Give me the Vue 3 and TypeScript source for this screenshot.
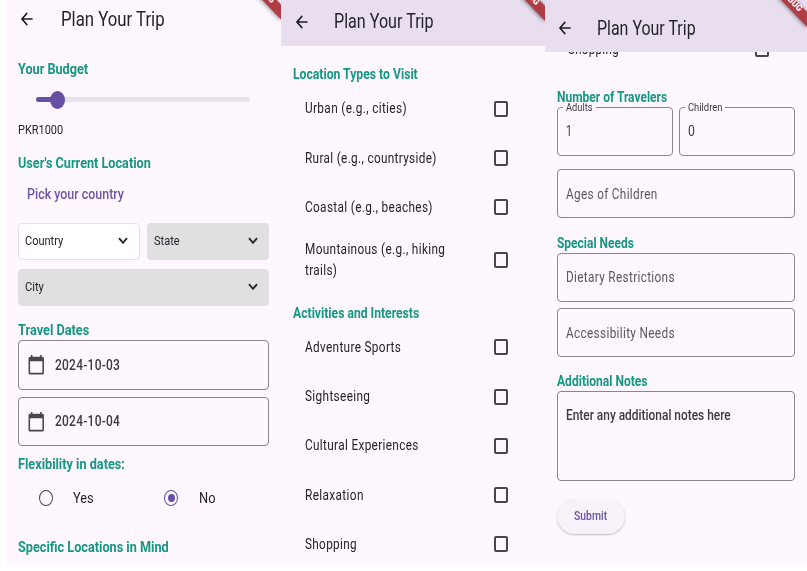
<script setup lang="ts">
import { ref } from 'vue'
import type { Directive } from 'vue'

// Condenses a label horizontally so that it spans the given number of pixels.
const vFit: Directive<HTMLElement, number> = {
  mounted(el, binding) {
    el.style.transform = `scaleX(${binding.value / el.offsetWidth})`
  },
}

interface Choice {
  lines: { text: string; width: number }[]
}

const locationTypes: Choice[] = [
  { lines: [{ text: 'Urban (e.g., cities)', width: 101.5 }] },
  { lines: [{ text: 'Rural (e.g., countryside)', width: 132 }] },
  { lines: [{ text: 'Coastal (e.g., beaches)', width: 127.5 }] },
  { lines: [{ text: 'Mountainous (e.g., hiking', width: 140 }, { text: 'trails)', width: 32 }] },
]

const activities: Choice[] = [
  { lines: [{ text: 'Adventure Sports', width: 96 }] },
  { lines: [{ text: 'Sightseeing', width: 65 }] },
  { lines: [{ text: 'Cultural Experiences', width: 113.7 }] },
  { lines: [{ text: 'Relaxation', width: 58.5 }] },
  { lines: [{ text: 'Shopping', width: 52 }] },
]

const dates = ['2024-10-03', '2024-10-04']
const flexible = ref('No')
const flexOptions = [
  { label: 'Yes', width: 21 },
  { label: 'No', width: 16.5 },
]
</script>

<template>
  <main class="board">
    <section class="screen first">
      <header class="bar">
        <svg class="back" viewBox="0 0 24 24" preserveAspectRatio="none"><path d="M20 11H7.83l5.59-5.59L12 4l-8 8 8 8 1.41-1.41L7.83 13H20v-2z" /></svg>
        <h1 v-fit="104">Plan Your Trip</h1>
      </header>
      <div class="body">
        <h2 v-fit="70.5">Your Budget</h2>
        <div class="slider"><div class="filled"></div><div class="thumb"></div></div>
        <div class="amount"><span v-fit="45.5">PKR1000</span></div>
        <h2 v-fit="133">User's Current Location</h2>
        <div class="pick"><span v-fit="97">Pick your country</span></div>
        <div class="selects">
          <div class="select open"><span v-fit="38.5">Country</span><svg class="chev" viewBox="0 0 10 8" preserveAspectRatio="none"><path d="M1 1.2 5 5.8 9 1.2" /></svg></div>
          <div class="select"><span v-fit="26">State</span><svg class="chev" viewBox="0 0 10 8" preserveAspectRatio="none"><path d="M1 1.2 5 5.8 9 1.2" /></svg></div>
          <div class="select wide"><span v-fit="19">City</span><svg class="chev" viewBox="0 0 10 8" preserveAspectRatio="none"><path d="M1 1.2 5 5.8 9 1.2" /></svg></div>
        </div>
        <h2 v-fit="71">Travel Dates</h2>
        <div class="dates">
          <div v-for="d in dates" :key="d" class="field">
            <svg class="cal" viewBox="0 0 24 24" preserveAspectRatio="none"><path d="M20 3h-1V1h-2v2H7V1H5v2H4c-1.1 0-2 .9-2 2v16c0 1.1.9 2 2 2h16c1.1 0 2-.9 2-2V5c0-1.1-.9-2-2-2zm0 18H4V8h16v13z" /></svg>
            <span v-fit="65">{{ d }}</span>
          </div>
        </div>
        <h2 v-fit="107">Flexibility in dates:</h2>
        <div class="radios">
          <label v-for="o in flexOptions" :key="o.label" @click="flexible = o.label">
            <i class="radio" :class="{ on: flexible === o.label }"></i>
            <span v-fit="o.width">{{ o.label }}</span>
          </label>
        </div>
        <h2 v-fit="150.5">Specific Locations in Mind</h2>
      </div>
      <svg class="ribbon" viewBox="0 0 40 40"><g transform="translate(0 -7.5)"><path d="M-6 -21 40 27V12L8 -21z" /><text transform="translate(30.5 11) rotate(46)">DEBUG</text></g></svg>
    </section>

    <section class="screen second">
      <header class="bar tinted">
        <svg class="back" viewBox="0 0 24 24" preserveAspectRatio="none"><path d="M20 11H7.83l5.59-5.59L12 4l-8 8 8 8 1.41-1.41L7.83 13H20v-2z" /></svg>
        <h1 v-fit="100">Plan Your Trip</h1>
      </header>
      <div class="body">
        <h2 v-fit="124.5">Location Types to Visit</h2>
        <div v-for="c in locationTypes" :key="c.lines[0].text" class="choice" :class="{ tall: c.lines.length > 1 }">
          <div class="lines"><span v-for="l in c.lines" :key="l.text" v-fit="l.width">{{ l.text }}</span></div>
          <i class="box"></i>
        </div>
        <h2 v-fit="126" class="activities">Activities and Interests</h2>
        <div v-for="c in activities" :key="c.lines[0].text" class="choice">
          <div class="lines"><span v-for="l in c.lines" :key="l.text" v-fit="l.width">{{ l.text }}</span></div>
          <i class="box"></i>
        </div>
      </div>
      <svg class="ribbon" viewBox="0 0 40 40"><g transform="translate(0 -6)"><path d="M-6 -21 40 27V12L8 -21z" /><text transform="translate(31 11.5) rotate(46)">DEBUG</text></g></svg>
    </section>

    <section class="screen third">
      <header class="bar tinted">
        <svg class="back" viewBox="0 0 24 24" preserveAspectRatio="none"><path d="M20 11H7.83l5.59-5.59L12 4l-8 8 8 8 1.41-1.41L7.83 13H20v-2z" /></svg>
        <h1 v-fit="99">Plan Your Trip</h1>
      </header>
      <div class="peek">
        <div class="choice">
          <div class="lines"><span v-fit="51">Shopping</span></div>
          <i class="box"></i>
        </div>
      </div>
      <div class="body">
        <h2 v-fit="110.5">Number of Travelers</h2>
        <div class="pair">
          <fieldset><legend class="adults"><span v-fit="26.5">Adults</span></legend><span v-fit="6">1</span></fieldset>
          <fieldset><legend class="children"><span v-fit="34">Children</span></legend><span v-fit="7">0</span></fieldset>
        </div>
        <div class="field hint ages"><span v-fit="91.5">Ages of Children</span></div>
        <h2 v-fit="77">Special Needs</h2>
        <div class="needs">
          <div class="field hint"><span v-fit="108.5">Dietary Restrictions</span></div>
          <div class="field hint"><span v-fit="108.5">Accessibility Needs</span></div>
        </div>
        <h2 v-fit="90.5" class="notes-title">Additional Notes</h2>
        <div class="field notes"><span v-fit="165">Enter any additional notes here</span></div>
        <button class="submit"><span v-fit="33">Submit</span></button>
      </div>
      <svg class="ribbon" viewBox="0 0 40 40"><path d="M-6 -21 40 27V12L8 -21z" /><text transform="translate(32 12) rotate(46)">DEBUG</text></svg>
    </section>
  </main>
</template>

<style>
body {
  background: #fff;
}
</style>

<style scoped>
.board {
  display: grid;
  grid-template-columns: 275px 264px 262px;
  padding-left: 6px;
  height: 571px;
  box-sizing: border-box;
  overflow: hidden;
  background: #fff;
  color: #25232a;
  font-family: Roboto, 'Liberation Sans', sans-serif;
  font-size: 14px;
}
.screen {
  position: relative;
  height: 565px;
  overflow: hidden;
  background: #fef7ff;
  display: flex;
  flex-direction: column;
}
.bar {
  display: flex;
  align-items: center;
  flex: none;
  box-sizing: border-box;
}
.tinted {
  background: #e8def0;
}
.first .bar { height: 38px; padding-left: 12px; }
.second .bar { height: 46px; padding: 0 0 3px 12px; }
.third .bar { height: 52px; padding: 4px 0 0 11px; }
.back {
  width: 17.5px;
  height: 20px;
  fill: #1d1b20;
  flex: none;
}
h1, h2 {
  margin: 0;
  white-space: nowrap;
  transform-origin: 0 50%;
}
span {
  display: inline-block;
  white-space: nowrap;
  transform-origin: 0 50%;
}
h1 {
  margin-left: 25px;
  padding-top: 1px;
  font-size: 19.5px;
  line-height: 24px;
  font-weight: 400;
}
.second h1 { margin-left: 23px; padding-top: 0; }
.third h1 { margin-left: 23.5px; }
h2 {
  width: max-content;
  height: 20px;
  line-height: 20px;
  font-size: 14px;
  font-weight: 700;
  color: #149882;
}
.body {
  display: flex;
  flex-direction: column;
  align-items: flex-start;
  flex: none;
}
.first .body { padding: 20.5px 12px 0; }
.second .body { padding: 18.2px 12px 0; }
.third .body { padding: 15px 12px 0 11.5px; }

.slider {
  display: flex;
  align-items: center;
  width: 214px;
  height: 5px;
  margin: 18.5px 0 0 18px;
  border-radius: 3px;
  background: #e8e0ea;
}
.filled {
  width: 21px;
  height: 5px;
  border-radius: 3px 0 0 3px;
  background: #6750a4;
}
.thumb {
  width: 15px;
  height: 18px;
  margin-left: -7px;
  flex: none;
  border-radius: 50%;
  background: #6750a4;
}
.amount {
  height: 18px;
  line-height: 18px;
  margin: 19px 0 14px;
  font-size: 12.5px;
}
.pick {
  height: 20px;
  line-height: 20px;
  margin: 11px 0 18.5px 9px;
  font-weight: 500;
  color: #6f55a8;
}
.selects {
  display: grid;
  grid-template-columns: 1fr 1fr;
  gap: 9px 7.5px;
  width: 251px;
  margin-bottom: 14.5px;
}
.select {
  display: flex;
  align-items: center;
  justify-content: space-between;
  box-sizing: border-box;
  height: 37px;
  padding: 0 10.5px 0 6px;
  border: 1px solid #dedede;
  border-radius: 4px;
  background: #e0e0e0;
  font-size: 12.3px;
}
.select span { margin-top: -0.5px; }
.open {
  background: #fff;
  border-color: #e6e1e8;
}
.wide { grid-column: span 2; }
.chev {
  width: 10px;
  height: 8px;
  fill: none;
  stroke: #2c2c2e;
  stroke-width: 2;
}
.field {
  display: flex;
  align-items: center;
  box-sizing: border-box;
  height: 49.5px;
  border: 1px solid #8c8590;
  border-radius: 4px;
  color: #3c3940;
}
.dates {
  display: grid;
  gap: 7px;
  width: 251px;
  margin-bottom: 7.5px;
}
.dates .field {
  font-weight: 500;
  padding-left: 8px;
}
.dates .field span { letter-spacing: 0.3px; }
.cal {
  width: 18.5px;
  height: 21.5px;
  margin-right: 9px;
  fill: #49454f;
}
.radios {
  display: grid;
  grid-template-columns: 125.5px 1fr;
  width: 251px;
  margin: 14px 0 29.5px;
}
.radios label {
  display: flex;
  align-items: center;
  height: 20px;
  padding-left: 20.5px;
}
.radio {
  display: flex;
  align-items: center;
  justify-content: center;
  box-sizing: border-box;
  width: 14px;
  height: 16px;
  margin-right: 20.5px;
  border: 1.8px solid #49454f;
  border-radius: 50%;
}
.radio.on { border-color: #6750a4; }
.radio.on::after {
  content: '';
  flex: none;
  width: 7px;
  height: 8px;
  border-radius: 50%;
  background: #6750a4;
}

.choice {
  display: flex;
  align-items: center;
  justify-content: space-between;
  box-sizing: border-box;
  width: 240px;
  height: 49.3px;
  padding: 0 25.5px 0 11.5px;
}
.tall { height: 56.5px; }
.lines {
  display: flex;
  flex-direction: column;
  align-items: flex-start;
  width: 150px;
  line-height: 21px;
  letter-spacing: 0.4px;
}
.box {
  box-sizing: border-box;
  width: 14px;
  height: 16px;
  border: 2px solid #49454f;
  border-radius: 2px;
}
.activities { margin-top: 14px; }

.peek {
  display: flex;
  align-items: flex-end;
  flex: none;
  height: 20px;
  padding-left: 11.5px;
  overflow: hidden;
}
.peek .choice {
  width: 238px;
  margin-bottom: -1.5px;
}
.peek .lines { padding-top: 2px; }
.peek .choice {
  flex: none;
}
.pair {
  display: grid;
  grid-template-columns: 116px 116px;
  gap: 6px;
}
fieldset {
  box-sizing: border-box;
  width: 116px;
  height: 54px;
  min-width: 0;
  margin: -5.5px 0 0;
  padding: 7.5px 0 0 8px;
  border: 1px solid #8c8590;
  border-radius: 4px;
  line-height: 20px;
  color: #3c3940;
}
legend {
  box-sizing: border-box;
  height: 12px;
  margin-left: -3px;
  padding: 0 3px;
  font-size: 10.5px;
  line-height: 12px;
}
.adults { width: 33px; }
.children { width: 40px; }
.hint {
  width: 238.5px;
  height: 49px;
  padding-left: 8px;
  color: #5b5660;
  letter-spacing: 0.4px;
}
.ages { margin: 13.5px 0 14.5px; }
.needs {
  display: grid;
  gap: 6.5px;
}
.notes-title { margin-top: 14px; }
.notes {
  width: 238.5px;
  height: 90px;
  align-items: flex-start;
  padding: 13px 0 0 8px;
  font-weight: 500;
  line-height: 20px;
}
.submit {
  width: 68px;
  height: 35px;
  margin-top: 17.5px;
  padding: 0 0 0 17px;
  border: 0;
  border-radius: 18px;
  background: #f7f2fa;
  box-shadow: 0 1px 2px rgba(0, 0, 0, 0.25);
  font: 500 12.3px Roboto, 'Liberation Sans', sans-serif;
  color: #6750a4;
  text-align: left;
}
.ribbon {
  position: absolute;
  top: 0;
  right: 0;
  width: 40px;
  height: 40px;
}
.ribbon path {
  fill: #b03d45;
  filter: drop-shadow(0 1px 2px rgba(0, 0, 0, 0.5));
}
.ribbon text {
  fill: #fff;
  font-size: 8.5px;
  font-weight: 800;
  text-anchor: end;
}
</style>
